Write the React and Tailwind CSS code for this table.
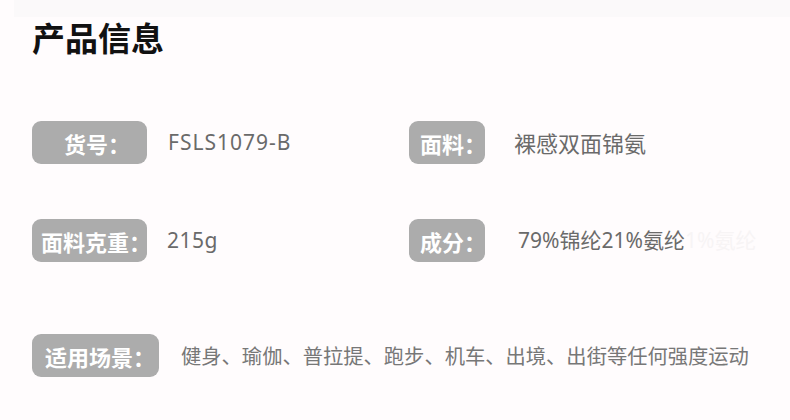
export default function App() {
  const font = { fontFamily: '"Noto Sans", "Noto Sans CJK SC", sans-serif' };
  const cjk = { fontFamily: '"Noto Sans CJK SC", sans-serif' };
  const badge = "h-[43px] shrink-0 rounded-[9px] bg-[#acacac] text-white text-[22px] font-semibold flex items-center leading-none whitespace-nowrap";
  return (
    <div className="w-[790px] h-[420px] bg-[#fffcfd] overflow-hidden" style={font}>
      <div className="ml-[14px] h-[17px] bg-[#fbf9fa]" />
      <h1 className="mt-[4px] ml-[32px] text-[33px] leading-[33px] font-bold text-[#111111]" style={cjk}>产品信息</h1>
      <div className="mt-[67px] ml-[32px] flex items-center h-[43px]">
        <div className="w-[377px] flex items-center">
          <div className={`${badge} w-[115px] pl-[32px]`} style={cjk}>货号：</div>
          <div className="ml-[21px] text-[21px] text-[#6a6a6a] tracking-[1px] whitespace-nowrap">FSLS1079-B</div>
        </div>
        <div className="flex items-center">
          <div className={`${badge} w-[76px] pl-[11px]`} style={cjk}>面料：</div>
          <div className="ml-[29px] text-[22px] text-[#6a6a6a] whitespace-nowrap" style={cjk}>裸感双面锦氨</div>
        </div>
      </div>
      <div className="mt-[55px] ml-[32px] flex items-center h-[43px]">
        <div className="w-[377px] flex items-center">
          <div className={`${badge} w-[115px] pl-[9px]`} style={cjk}>面料克重：</div>
          <div className="ml-[20px] text-[21px] text-[#6a6a6a] tracking-[0.5px] whitespace-nowrap">215g</div>
        </div>
        <div className="flex items-center">
          <div className={`${badge} w-[76px] pl-[11px]`} style={cjk}>成分：</div>
          <div className="ml-[33px] text-[21px] text-[#6a6a6a] whitespace-nowrap">79%锦纶21%氨纶<span className="text-[#f7f4f5]">1%氨纶</span></div>
        </div>
      </div>
      <div className="mt-[72px] ml-[32px] flex items-center h-[43px]">
        <div className={`${badge} w-[127px] pl-[13px]`} style={cjk}>适用场景：</div>
        <div className="ml-[22px] text-[20.3px] text-[#777777] whitespace-nowrap" style={cjk}>健身、瑜伽、普拉提、跑步、机车、出境、出街等任何强度运动</div>
      </div>
    </div>
  );
}
